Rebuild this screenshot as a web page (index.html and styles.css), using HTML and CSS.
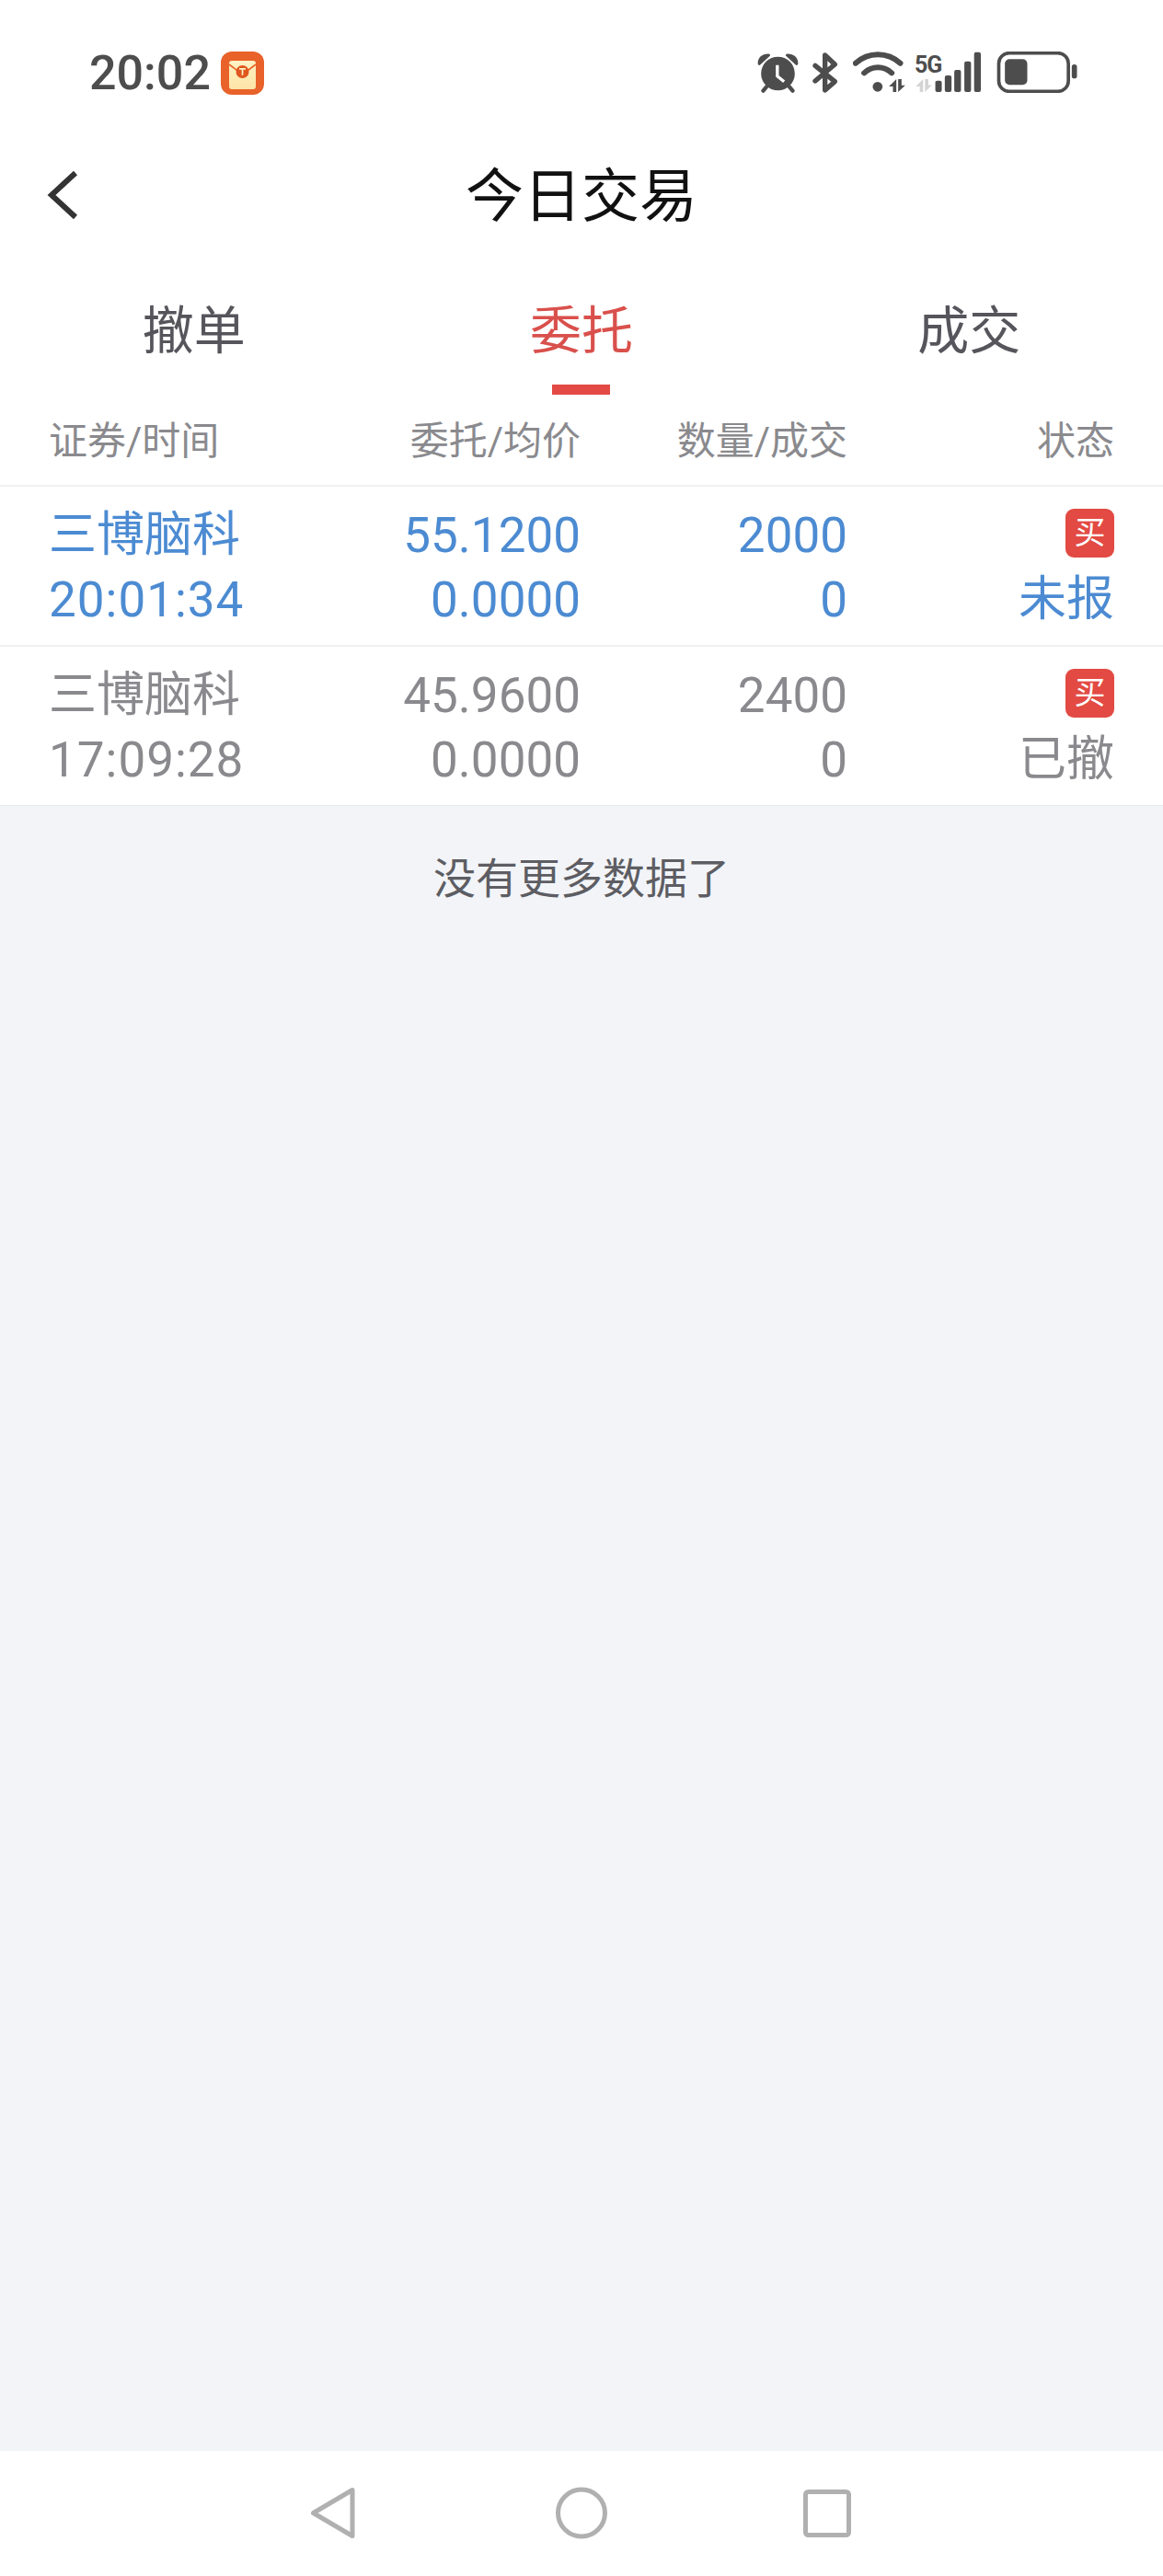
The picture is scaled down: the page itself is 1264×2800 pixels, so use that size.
FILE: index.html
```html
<!DOCTYPE html>
<html lang="zh">
<head>
<meta charset="utf-8">
<title>今日交易</title>
<link rel="stylesheet" href="styles.css">
</head>
<body>
<div class="page">
  <div class="statusbar">
    <div class="status-left">
      <span class="clock">20:02</span>
      <svg class="app-icon" viewBox="0 0 47 47">
        <defs>
          <linearGradient id="env" x1="0" y1="0" x2="0" y2="1"><stop offset="0" stop-color="#fff3c4"/><stop offset="1" stop-color="#fde3a6"/></linearGradient>
        </defs>
        <rect width="47" height="47" rx="12" fill="#e8622a"/>
        <rect x="9" y="10" width="29" height="31" rx="3" fill="url(#env)"/>
        <path d="M9 14 L23.5 25 L38 14" fill="none" stroke="#e8622a" stroke-width="1.6"/>
        <circle cx="23.5" cy="22" r="7" fill="#e0561f"/>
        <path d="M20 18.8h7M23.5 18.8v7" fill="none" stroke="#fff3c4" stroke-width="1.7"/>
      </svg>
    </div>
    <div class="status-right">
      <svg class="ic ic-alarm" viewBox="60 50 140 135">
        <circle cx="130" cy="122" r="55" fill="#4d4d4d"/>
        <path d="M69 90 C68 72 82 60 100 62 Z M191 90 C192 72 178 60 160 62 Z" fill="#4d4d4d" stroke="#4d4d4d" stroke-width="9" stroke-linejoin="round"/>
        <path d="M92 166 L82 178 M168 166 L178 178" stroke="#4d4d4d" stroke-width="13" stroke-linecap="round"/>
        <path d="M128 94 V130 L150 148" fill="none" stroke="#fff" stroke-width="10"/>
      </svg>
      <svg class="ic ic-bt" viewBox="243 50 90 135">
        <path d="M252 96 L316 148 L284 176 V62 L316 92 L252 146" fill="none" stroke="#4d4d4d" stroke-width="16" stroke-linejoin="round" stroke-linecap="round"/>
      </svg>
      <svg class="ic ic-wifi" viewBox="378 50 170 135">
        <path d="M386 88 C428 50 490 50 532 88" fill="none" stroke="#4d4d4d" stroke-width="18" stroke-linecap="round"/>
        <path d="M414 120 C440 96 478 96 504 120" fill="none" stroke="#4d4d4d" stroke-width="18" stroke-linecap="round"/>
        <circle cx="458" cy="165" r="16" fill="#4d4d4d"/>
        <path d="M519 140 V182 H508 V164 L495 164 Z M525 140 H536 V160 H548 L525 182 Z" fill="#4d4d4d"/>
      </svg>
      <div class="signal">
        <span class="fiveg">5G</span>
        <svg class="ic ic-signal" viewBox="580 50 220 135">
          <path d="M608 140 V182 H597 V164 L584 164 Z M614 140 H625 V160 H637 L614 182 Z" fill="#d4d4d4"/>
          <rect x="648" y="145" width="21" height="37" rx="6" fill="#4d4d4d"/>
          <rect x="679" y="128" width="22" height="54" rx="6" fill="#4d4d4d"/>
          <rect x="710" y="110" width="22" height="72" rx="6" fill="#4d4d4d"/>
          <rect x="743" y="82" width="22" height="100" rx="6" fill="#4d4d4d"/>
          <rect x="775" y="52" width="22" height="130" rx="6" fill="#4d4d4d"/>
        </svg>
      </div>
      <svg class="ic ic-batt" viewBox="848 50 266 135">
        <rect x="855" y="55" width="227" height="125" rx="34" fill="none" stroke="#4d4d4d" stroke-width="11"/>
        <rect x="875" y="75" width="73" height="84" rx="15" fill="#4d4d4d"/>
        <rect x="1093" y="92" width="17" height="46" rx="8" fill="#4d4d4d"/>
      </svg>
    </div>
  </div>

  <header class="navbar">
    <svg class="back" viewBox="0 0 36 56"><path d="M31 4 L5 28 L31 52" fill="none" stroke="#333" stroke-width="6"/></svg>
    <h1 class="title">今日交易</h1>
  </header>

  <nav class="tabs">
    <a class="tab">撤单</a>
    <a class="tab active">委托</a>
    <a class="tab">成交</a>
  </nav>

  <div class="grid head">
    <div>证券/时间</div>
    <div class="r">委托/均价</div>
    <div class="r">数量/成交</div>
    <div class="r">状态</div>
  </div>

  <div class="grid row pending">
    <div><div class="line cjk">三博脑科</div><div class="line time">20:01:34</div></div>
    <div class="r"><div class="line">55.1200</div><div class="line">0.0000</div></div>
    <div class="r"><div class="line">2000</div><div class="line">0</div></div>
    <div class="r"><div class="line"><span class="badge">买</span></div><div class="line cjk">未报</div></div>
  </div>
  <div class="grid row cancelled">
    <div><div class="line cjk">三博脑科</div><div class="line time">17:09:28</div></div>
    <div class="r"><div class="line">45.9600</div><div class="line">0.0000</div></div>
    <div class="r"><div class="line">2400</div><div class="line">0</div></div>
    <div class="r"><div class="line"><span class="badge">买</span></div><div class="line cjk">已撤</div></div>
  </div>

  <main class="rest">
    <p class="nomore">没有更多数据了</p>
  </main>

  <footer class="sysnav">
    <svg class="nav-back" viewBox="0 0 49 57"><path d="M46 3.5 V53.5 L3.5 28.5 Z" fill="none" stroke="#b0b0b0" stroke-width="5" stroke-linejoin="round"/></svg>
    <svg class="nav-home" viewBox="0 0 56 57"><circle cx="28" cy="28.5" r="25.5" fill="none" stroke="#b0b0b0" stroke-width="5"/></svg>
    <svg class="nav-recent" viewBox="0 0 52 52"><rect x="2.5" y="2.5" width="47" height="47" rx="3" fill="none" stroke="#b0b0b0" stroke-width="5"/></svg>
  </footer>
</div>
</body>
</html>
```

FILE: styles.css
```css
* { box-sizing: border-box; }
html, body { margin: 0; padding: 0; background: #fff; }
body { font-family: Roboto, "Noto Sans CJK SC", sans-serif; }
.page { display: flex; flex-direction: column; width: 1264px; height: 2800px; overflow: hidden; }

.statusbar { display: flex; justify-content: space-between; height: 160px; padding: 56px 92px 0 97px; }
.status-left { display: flex; align-items: flex-start; gap: 11px; }
.clock { font-size: 52px; line-height: 47px; font-weight: 500; color: #4d4d4d; }
.app-icon { width: 47px; height: 47px; display: block; }
.status-right { display: flex; align-items: flex-start; height: 47px; }
.ic { display: block; height: 45px; }
.ic-alarm { width: 47px; margin-right: 14px; }
.ic-bt { width: 30px; margin-right: 14px; }
.ic-wifi { width: 57px; margin-right: 10px; }
.signal { position: relative; width: 73px; height: 45px; margin-right: 16px; }
.ic-signal { width: 73px; }
.fiveg { position: absolute; left: 0; top: 2px; font-size: 25px; line-height: 25px; font-weight: 700; color: #4d4d4d; letter-spacing: -1px; }
.ic-batt { width: 89px; }

.navbar { position: relative; height: 103px; display: flex; align-items: flex-start; justify-content: center; }
.back { position: absolute; left: 51px; top: 24px; width: 36px; height: 56px; }
.title { margin: 0; height: 90px; padding-top: 18px; font-size: 63px; line-height: 72px; font-weight: 400; color: #111; }

.tabs { display: grid; grid-template-columns: repeat(3, 1fr); height: 166px; }
.tab { position: relative; height: 166px; padding-top: 63px; text-align: center; font-size: 56px; line-height: 68px; color: #55555b; }
.tab.active { color: #d9504c; }
.tab.active::after { content: ""; position: absolute; left: 50%; top: 155px; width: 63px; height: 11px; margin-left: -32px; background: #e24a43; }

.grid { display: grid; grid-template-columns: 300px 278px 290px 290px; padding: 0 53px; }
.r { text-align: right; }
.head { height: 100px; padding-top: 26px; font-size: 42px; line-height: 50px; color: #8a8a8e; border-bottom: 2px solid #f0f0f2; }
.row { height: 174px; padding-top: 18px; font-size: 53px; border-bottom: 2px solid #f0f0f2; }
.line { height: 70px; line-height: 70px; }
.cjk { font-size: 52px; }
.time { letter-spacing: 1px; }
.pending { color: #4c8bd2; }
.cancelled { color: #8a8a8e; height: 173px; border-bottom-width: 1px; border-bottom-color: #e8eaee; }
.badge { display: inline-block; width: 53px; height: 53px; margin-top: 6px; border-radius: 9px; background: #e24a43; color: #fff; font-size: 34px; line-height: 53px; text-align: center; vertical-align: top; }

.rest { flex: 1; background: #f2f4f8; }
.nomore { margin: 0; padding-top: 49px; text-align: center; font-size: 46px; line-height: 60px; color: #5d5d63; }

.sysnav { height: 136px; background: #fff; display: flex; align-items: flex-start; padding: 39px 0 0 337px; }
.nav-back { width: 49px; height: 57px; margin-right: 218px; }
.nav-home { width: 56px; height: 57px; margin-right: 213px; }
.nav-recent { width: 52px; height: 52px; margin-top: 3px; }
```
